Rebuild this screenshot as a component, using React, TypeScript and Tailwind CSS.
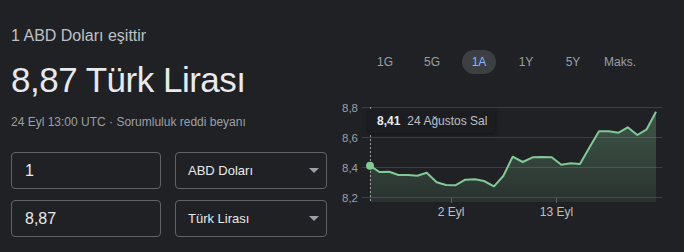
import React from "react";

const font = { fontFamily: '"Liberation Sans", Arial, sans-serif' };

// chart points in page coordinates
const points: [number, number][] = [
  [370, 165.7], [379.3, 172], [389.3, 171.7], [398.3, 175], [408.3, 175],
  [417.3, 175.7], [426.7, 172.7], [436.7, 182.3], [446, 185], [455.3, 185.3],
  [465.3, 179.7], [475, 179.3], [484, 181], [494, 186.3], [503.3, 176],
  [512.7, 156.7], [522.7, 162], [532.7, 157.3], [542, 157], [551.7, 157.3],
  [561.3, 164.7], [570.7, 163.3], [580, 164], [589.3, 147.7], [599, 131.3],
  [608.7, 131.3], [618.7, 132.7], [627.7, 127.3], [637.3, 135], [646.7, 129.3],
  [656, 111.7],
];

const OX = 340;
const OY = 95;

function Chart() {
  const line = points.map(([x, y], i) => `${i ? "L" : "M"}${x - OX} ${y - OY}`).join(" ");
  const area = `${line} L${656 - OX} ${202 - OY} L${370 - OX} ${202 - OY} Z`;
  const grid = [
    { y: 107.5, label: "8,8" },
    { y: 137.5, label: "8,6" },
    { y: 167.5, label: "8,4" },
    { y: 197.5, label: "8,2" },
  ];
  return (
    <div className="relative h-[130px] w-[344px]">
      <svg width="344" height="130" className="absolute left-0 top-0">
        <defs>
          <linearGradient id="fill" x1="0" y1="0" x2="0" y2="1">
            <stop offset="0%" stopColor="#81c995" stopOpacity="0.32" />
            <stop offset="100%" stopColor="#81c995" stopOpacity="0.1" />
          </linearGradient>
        </defs>
        {grid.map((g) => (
          <g key={g.label}>
            <line x1={362 - OX} x2={662 - OX} y1={g.y - OY} y2={g.y - OY} stroke="#3c4043" strokeWidth="1" />
            <text x={358 - OX} y={g.y - OY + 4} textAnchor="end" fontSize="11.5" fill="#9aa0a6" style={font}>
              {g.label}
            </text>
          </g>
        ))}
        <line x1={370.5 - OX} x2={370.5 - OX} y1={107 - OY} y2={202 - OY} stroke="#9aa0a6" strokeWidth="1" strokeDasharray="2 2" />
        <path d={area} fill="url(#fill)" />
        <path d={line} fill="none" stroke="#81c995" strokeWidth="2" strokeLinejoin="round" />
        <circle cx={370 - OX} cy={165.7 - OY} r="4" fill="#81c995" />
        <line x1={451.5 - OX} x2={451.5 - OX} y1={198 - OY} y2={203 - OY} stroke="#5f6368" />
        <line x1={556.5 - OX} x2={556.5 - OX} y1={198 - OY} y2={203 - OY} stroke="#5f6368" />
        <text x={451 - OX} y={216 - OY} textAnchor="middle" fontSize="12" fill="#bdc1c6" style={font}>
          2 Eyl
        </text>
        <text x={556.5 - OX} y={216 - OY} textAnchor="middle" fontSize="12" fill="#bdc1c6" style={font}>
          13 Eyl
        </text>
      </svg>
      <div className="absolute left-[28px] top-[14px] flex h-[24px] w-[127px] items-center gap-[7px] whitespace-nowrap bg-[#1c1d20] pl-[9px] text-[12px] shadow-[0_1px_4px_rgba(0,0,0,0.5)]">
        <span className="font-bold text-[#e8eaed]">8,41</span>
        <span className="text-[#bdc1c6]">24 Ağustos Sal</span>
      </div>
    </div>
  );
}

function Field({ value }: { value: string }) {
  return (
    <div className="flex h-[37px] w-[150px] items-center rounded-[4px] border border-[#5f6368] pl-[13px] text-[16px] text-[#e8eaed]">
      {value}
    </div>
  );
}

function Select({ value }: { value: string }) {
  return (
    <div className="flex h-[37px] w-[152px] items-center justify-between rounded-[4px] border border-[#5f6368] pl-[12px] pr-[7px] text-[13px] text-[#e8eaed]">
      <span>{value}</span>
      <span className="h-0 w-0 border-x-[5px] border-t-[5px] border-x-transparent border-t-[#9aa0a6]" />
    </div>
  );
}

export default function App() {
  const tabs = ["1G", "5G", "1A", "1Y", "5Y", "Maks."];
  return (
    <div className="flex h-[252px] w-[684px] bg-[#202124]" style={font}>
      <div className="w-[340px] pl-[11px] pt-[27px]">
        <div className="text-[16px] leading-[18px] text-[#bdc1c6]">1 ABD Doları eşittir</div>
        <div className="mt-[15px] text-[35px] leading-[40px] tracking-[-0.5px] text-[#e8eaed]">8,87 Türk Lirası</div>
        <div className="mt-[15px] text-[12px] leading-[14px] text-[#9aa0a6]">
          24 Eyl 13:00 UTC · Sorumluluk reddi beyanı
        </div>
        <div className="mt-[23px] flex flex-col gap-[11px]">
          <div className="flex gap-[14px]">
            <Field value="1" />
            <Select value="ABD Doları" />
          </div>
          <div className="flex gap-[14px]">
            <Field value="8,87" />
            <Select value="Türk Lirası" />
          </div>
        </div>
      </div>
      <div className="flex flex-1 flex-col">
        <div className="mt-[50px] flex pl-[21.5px]">
          {tabs.map((t) => (
            <div key={t} className="flex w-[47px] justify-center">
              <span
                className={
                  t === "1A"
                    ? "flex h-[24px] items-center rounded-full bg-[#3c4043] px-[10px] text-[12px] text-[#8ab4f8]"
                    : "flex h-[24px] items-center px-[10px] text-[12px] text-[#9aa0a6]"
                }
              >
                {t}
              </span>
            </div>
          ))}
        </div>
        <div className="mt-[21px]">
          <Chart />
        </div>
      </div>
    </div>
  );
}
